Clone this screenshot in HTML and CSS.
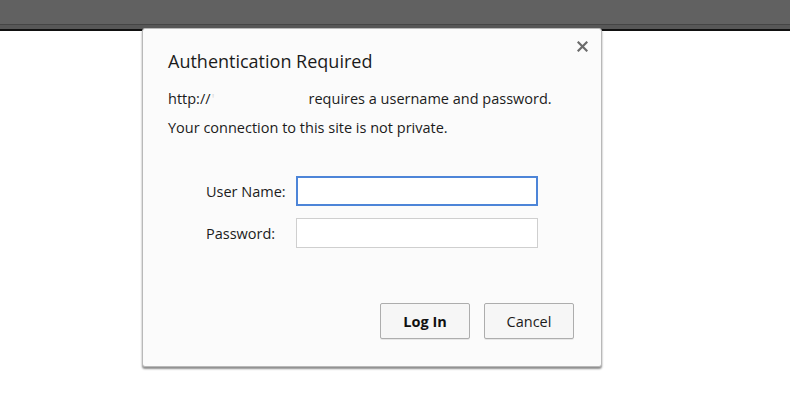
FILE: index.html
```html
<!DOCTYPE html>
<html lang="en">

<head>
    <meta charset="UTF-8">
    <meta name="viewport" content="width=device-width, initial-scale=1.0">
    <title>Authentication Required</title>
    <link rel="stylesheet" href="styles.css">
</head>

<body>
    <div class="toolbar">
        <div class="toolbar-main"></div>
        <div class="toolbar-edge"></div>
    </div>

    <div class="dialog">
        <button class="close" type="button" aria-label="Close">
            <svg width="11" height="11" viewBox="0 0 11 11">
                <path d="M1.5 1.5 L9.5 9.5 M9.5 1.5 L1.5 9.5" stroke="#6b6b6b" stroke-width="2.2" stroke-linecap="square" />
            </svg>
        </button>
        <h1 class="title">Authentication Required</h1>
        <p class="message">http://<span class="hidden-host">'</span>requires a username and password.</p>
        <p class="message">Your connection to this site is not private.</p>

        <form class="login-form">
            <label for="user">User Name:</label>
            <input id="user" class="field focused" type="text">
            <label for="pass">Password:</label>
            <input id="pass" class="field" type="password">
        </form>

        <div class="buttons">
            <button class="btn btn-primary" type="button">Log In</button>
            <button class="btn" type="button">Cancel</button>
        </div>
    </div>
</body>

</html>
```

FILE: styles.css
```css
* {
    margin: 0;
    padding: 0;
    box-sizing: border-box;
}

body {
    background-color: #fff;
    font-family: "Open Sans", "Noto Sans", sans-serif;
    color: #1b1b1b;
}

.toolbar .toolbar-main {
    height: 24px;
    background-color: #616161;
}

.toolbar .toolbar-edge {
    height: 7px;
    background-color: #575757;
    border-top: 1px solid #454545;
    border-bottom: 2px solid #111;
}

/* the modal sits over the toolbar edge */
.dialog {
    position: absolute;
    left: 142px;
    top: 28px;
    width: 460px;
    height: 339px;
    padding: 20px 27px 27px 25px;
    background-color: #fbfbfb;
    border: 1px solid #b9b9b9;
    border-radius: 3px;
    box-shadow: 0 2px 2px rgba(0, 0, 0, 0.45);
    display: flex;
    flex-direction: column;
}

.dialog .close {
    position: absolute;
    top: 12px;
    right: 13px;
    width: 11px;
    height: 11px;
    border: 0;
    background: none;
    display: flex;
}

.dialog .title {
    font-size: 18px;
    font-weight: normal;
    color: #1b1b1b;
    line-height: 24px;
    margin-bottom: 17px;
}

.dialog .message {
    font-size: 14.5px;
    line-height: 18px;
    margin-bottom: 11px;
}

.dialog .message .hidden-host {
    display: inline-block;
    width: 98px;
    padding-left: 1px;
    color: #ddd;
}

.login-form {
    display: grid;
    grid-template-columns: 90px 242px;
    row-gap: 12px;
    align-items: center;
    margin: 28px 0 0 38px;
    font-size: 14.5px;
}

.login-form .field {
    height: 30px;
    border: 1px solid #cfcfcf;
    background-color: #fff;
    outline: none;
    padding: 0 6px;
    font-family: inherit;
}

.login-form .field.focused {
    border: 2px solid #4d85d8;
}

.buttons {
    margin-top: auto;
    display: flex;
    justify-content: flex-end;
    gap: 14px;
}

.btn {
    width: 90px;
    height: 36px;
    border: 1px solid #adadad;
    border-radius: 2px;
    background-color: #f6f6f6;
    font-family: inherit;
    font-size: 14.5px;
    color: #1b1b1b;
    box-shadow: 0 1px 0 rgba(0, 0, 0, 0.08);
}

.btn.btn-primary {
    font-weight: bold;
    color: #111;
}
```
